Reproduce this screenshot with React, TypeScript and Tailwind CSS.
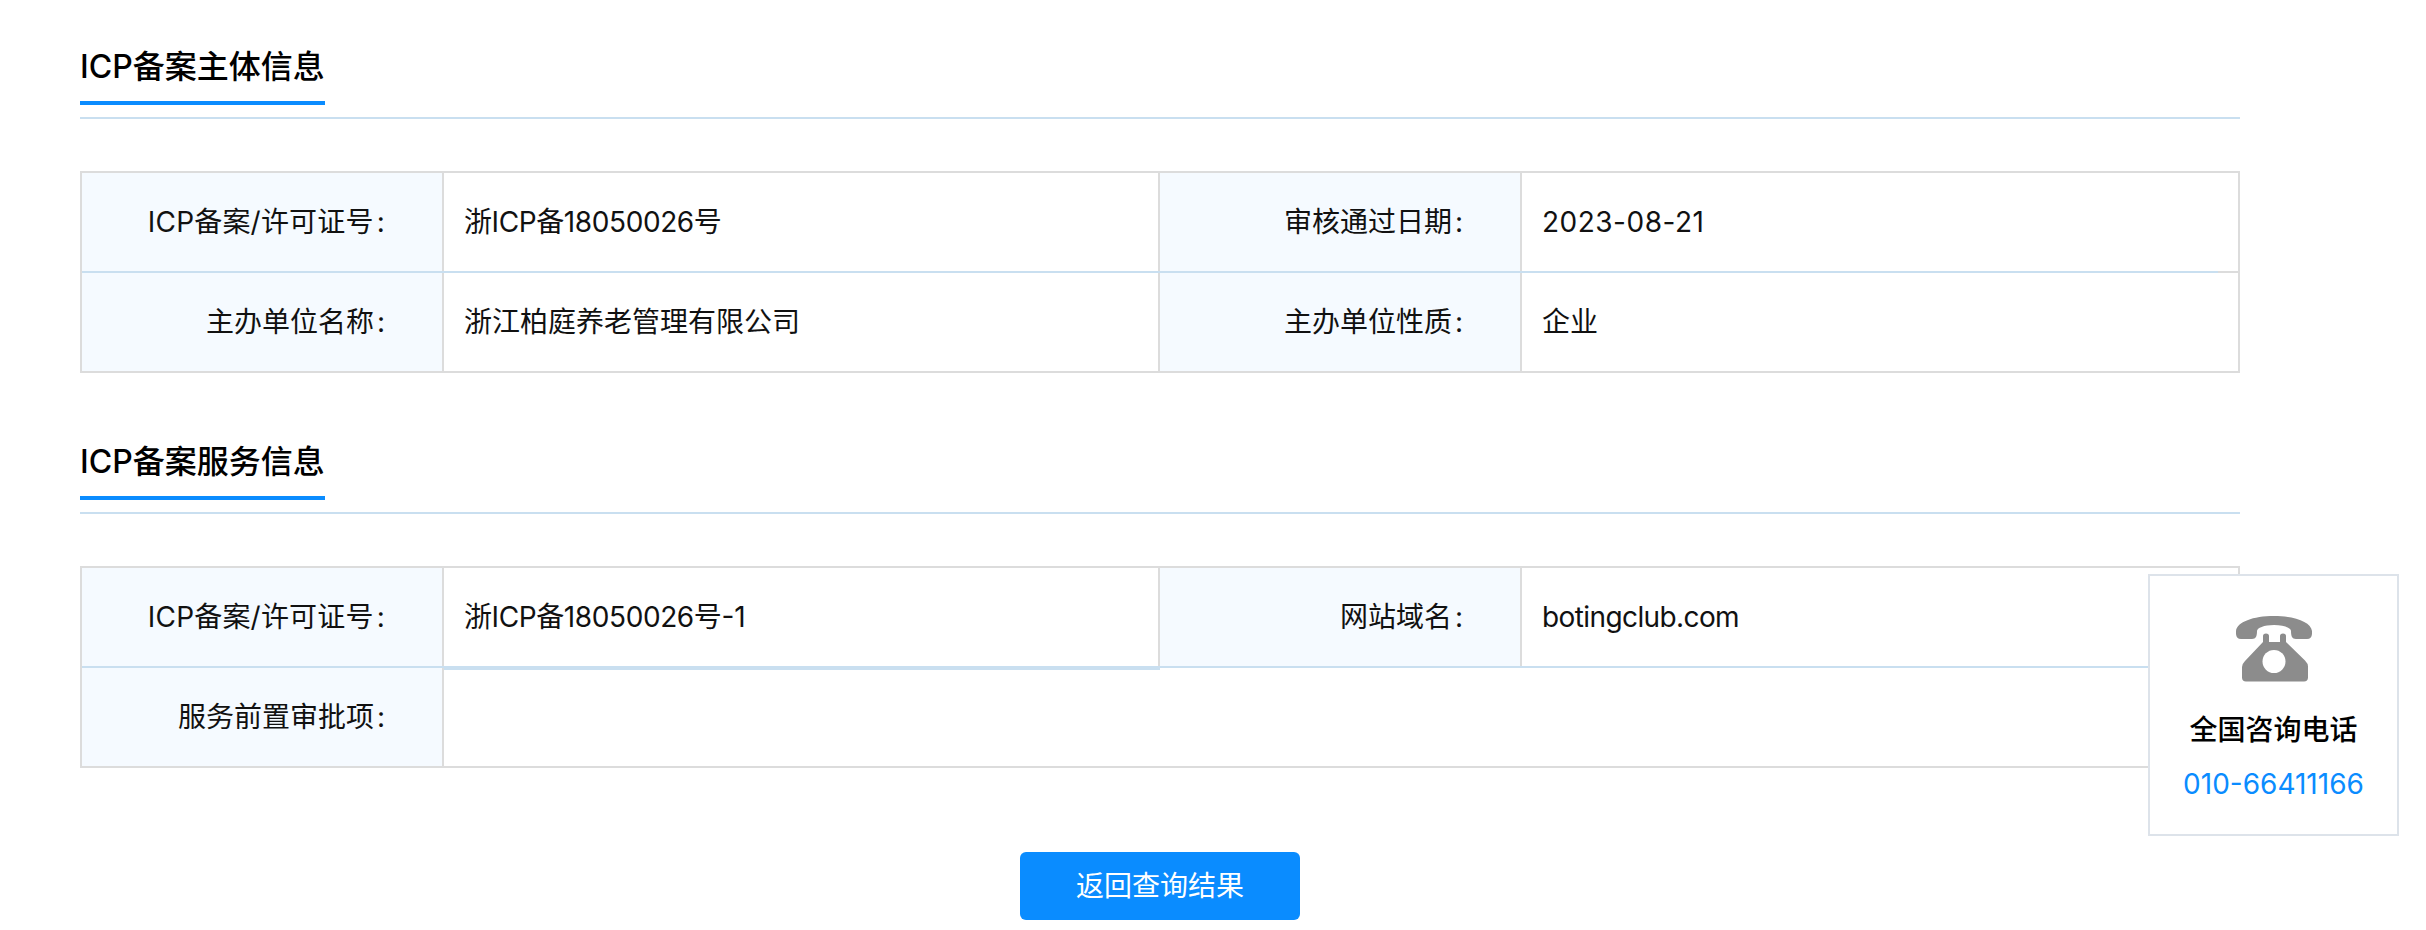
import type { ReactNode } from "react";

const fontStack = "font-['Inter','Noto_Sans_CJK_SC',sans-serif]";

function Label({ text, className = "" }: { text: string; className?: string }) {
  return (
    <div className={`w-[360px] shrink-0 whitespace-nowrap bg-[#f5faff] pr-[57px] text-right text-[28px] leading-[98px] text-[#111] ${className}`}>
      {text}
      <span className="ml-[3px]">:</span>
    </div>
  );
}

function VLine() {
  return <div className="w-[2px] shrink-0 bg-[#dcdcdc]" />;
}

function RowLine() {
  return (
    <div className="flex h-[2px]">
      <div className="flex-1 bg-[#c9dff0]" />
      <div className="w-5 bg-[#dcdcdc]" />
    </div>
  );
}

function Value({ children, wide, marked, className = "" }: { children?: ReactNode; wide?: boolean; marked?: boolean; className?: string }) {
  return (
    <div className={`relative ${wide ? "flex-1" : "w-[714px] shrink-0"} whitespace-nowrap pl-[20px] text-[28px] leading-[98px] text-[#111] ${className}`}>
      {children}
      {marked && <div className="absolute -right-[2px] left-0 top-[calc(100%+2px)] z-10 h-[2px] bg-[#c9dff0]" />}
    </div>
  );
}

function SectionTitle({ title }: { title: string }) {
  return (
    <div className="mb-[52px] border-b-2 border-[#c9dff0] pb-3">
      <div className="w-[245px] whitespace-nowrap border-b-4 border-[#0a8cff] pb-[10px] text-[32px] font-medium leading-[48px] text-black">
        {title}
      </div>
    </div>
  );
}

function PhoneIcon() {
  return (
    <svg width="76" height="66" viewBox="0 0 76 66" fill="#8c8c8c">
      <path d="M0 15C1 6 17 0 38 0s37 6 38 15c.4 5-1 8-5 8H60c-4 0-5-3-5-8 0-3-7-6-17-6s-17 3-17 6c0 5-1 8-5 8H5c-4 0-5.400-3-5-8z" />
      <path d="M27 20c0-1.500 1-2.500 3-2.500s3 1 3 2.500v6h11v-6c0-1.500 1-2.500 3-2.500s3 1 3 2.500v6l19 18.500q3 3 3 6v11c0 2.500-1.500 4-4 4H10c-2.500 0-4-1.500-4-4V51q0-3 3-6l18-19z" />
      <circle cx="38" cy="45.500" r="11.500" fill="#fff" />
    </svg>
  );
}

export default function App() {
  return (
    <div className={`relative h-[930px] overflow-hidden bg-white pt-[43px] ${fontStack}`}>
      <div className="ml-[80px] w-[2160px]">
        <SectionTitle title="ICP备案主体信息" />
        <div className="border-2 border-[#dcdcdc]">
          <div className="flex h-[98px]">
            <Label text="ICP备案/许可证号" className="tracking-[0.2px]" />
            <VLine />
            <Value className="tracking-[-0.4px]">浙ICP备18050026号</Value>
            <VLine />
            <Label text="审核通过日期" />
            <VLine />
            <Value wide className="tracking-[0.5px]">2023-08-21</Value>
          </div>
          <RowLine />
          <div className="flex h-[98px]">
            <Label text="主办单位名称" />
            <VLine />
            <Value>浙江柏庭养老管理有限公司</Value>
            <VLine />
            <Label text="主办单位性质" />
            <VLine />
            <Value wide>企业</Value>
          </div>
        </div>

        <div className="mt-[65px]">
          <SectionTitle title="ICP备案服务信息" />
        </div>
        <div className="border-2 border-[#dcdcdc]">
          <div className="flex h-[98px]">
            <Label text="ICP备案/许可证号" className="tracking-[0.2px]" />
            <VLine />
            <Value marked>
              <span className="tracking-[-0.4px]">浙ICP备18050026号</span>-1
            </Value>
            <VLine />
            <Label text="网站域名" />
            <VLine />
            <Value wide className="tracking-[-0.6px]">botingclub.com</Value>
          </div>
          <RowLine />
          <div className="flex h-[98px]">
            <Label text="服务前置审批项" />
            <VLine />
            <Value wide />
          </div>
        </div>

        <div className="mt-[84px] flex justify-center">
          <button className="h-[68px] w-[280px] rounded-md bg-[#0a8cff] text-[28px] text-white">返回查询结果</button>
        </div>
      </div>

      <div className="absolute right-[27px] top-[574px] flex h-[262px] w-[251px] flex-col items-center border-2 border-[#dde3ea] bg-white pt-[40px]">
        <PhoneIcon />
        <div className="mt-[28px] text-[28px] font-medium leading-[40px] text-black">全国咨询电话</div>
        <div className="mt-[14px] text-[28px] leading-[40px] text-[#0a8cff]">010-66411166</div>
      </div>
    </div>
  );
}
